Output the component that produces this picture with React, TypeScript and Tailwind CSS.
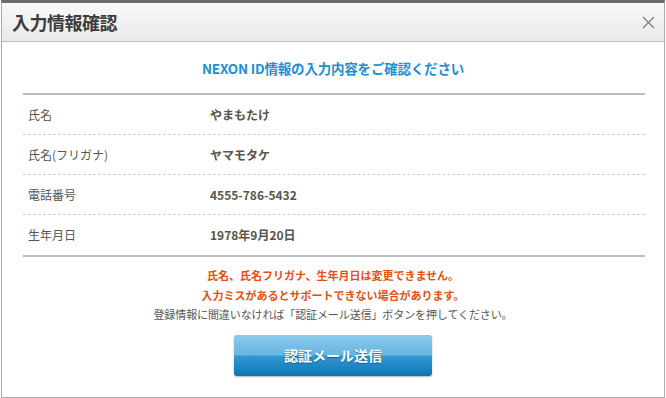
const rows = [
  { label: "氏名", value: "やまもたけ" },
  { label: "氏名(フリガナ)", value: "ヤマモタケ" },
  { label: "電話番号", value: "4555-786-5432" },
  { label: "生年月日", value: "1978年9月20日" },
];

export default function App() {
  return (
    <div
      className="w-[666px] h-[398px] bg-white overflow-hidden"
      style={{ fontFamily: '"Noto Sans CJK JP", "Noto Sans", sans-serif' }}
    >
      <div className="ml-[1px] w-[664px] h-[398px] border-x border-b border-[#a9a9a9] border-t-[3px] border-t-[#6b6b6b] flex flex-col">
        {/* header */}
        <div className="h-[39px] flex items-center justify-between pl-[10px] pr-[9px] border-b border-[#bcbcbc] bg-gradient-to-b from-[#f9f9f9] to-[#e9e9e9]">
          <h1 className="text-[18px] leading-none font-bold text-[#3d3d3d] tracking-[-0.5px]">入力情報確認</h1>
          <svg width="13" height="13" viewBox="0 0 13 13" className="mt-[1px]">
            <path d="M1 1 L12 12 M12 1 L1 12" stroke="#7a7a7a" strokeWidth="1.2" fill="none" />
          </svg>
        </div>

        {/* body */}
        <div className="flex flex-col">
          <p className="mt-[16px] mb-[15px] text-center text-[13.5px] leading-[20px] font-bold text-[#1d8fd5] tracking-[-0.2px]">
            NEXON ID情報の入力内容をご確認ください
          </p>

          <div className="ml-[21px] w-[622px] border-t-2 border-b-2 border-[#bdbdbd]">
            {rows.map((r, i) => (
              <div
                key={r.label}
                className={
                  "flex items-center h-[40px] text-[12px] " +
                  (i < rows.length - 1 ? "border-b border-dashed border-[#cfcfcf]" : "")
                }
              >
                <div className="w-[187px] pl-[5px] text-[#555]">{r.label}</div>
                <div className="font-bold text-[#55554d]">{r.value}</div>
              </div>
            ))}
          </div>

          <div className="mt-[8px] text-center text-[11px]">
            <p className="leading-[20px] font-bold text-[#e4500f]">氏名、氏名フリガナ、生年月日は変更できません。</p>
            <p className="leading-[20px] font-bold text-[#e4500f]">入力ミスがあるとサポートできない場合があります。</p>
            <p className="leading-[19px] text-[#555] tracking-[-0.1px]">
              登録情報に間違いなければ「認証メール送信」ボタンを押してください。
            </p>
          </div>

          <div className="flex justify-center mt-[11px]">
            <button className="w-[198px] h-[41px] rounded-[3px] text-white text-[14px] font-bold shadow-[0_1px_2px_rgba(0,0,0,0.3)] bg-[linear-gradient(to_bottom,#8ccaec_0%,#67b5e2_48%,#3398d2_52%,#0a76b6_100%)] [text-shadow:0_1px_1px_rgba(0,60,110,0.6)]">
              認証メール送信
            </button>
          </div>
        </div>
      </div>
    </div>
  );
}
